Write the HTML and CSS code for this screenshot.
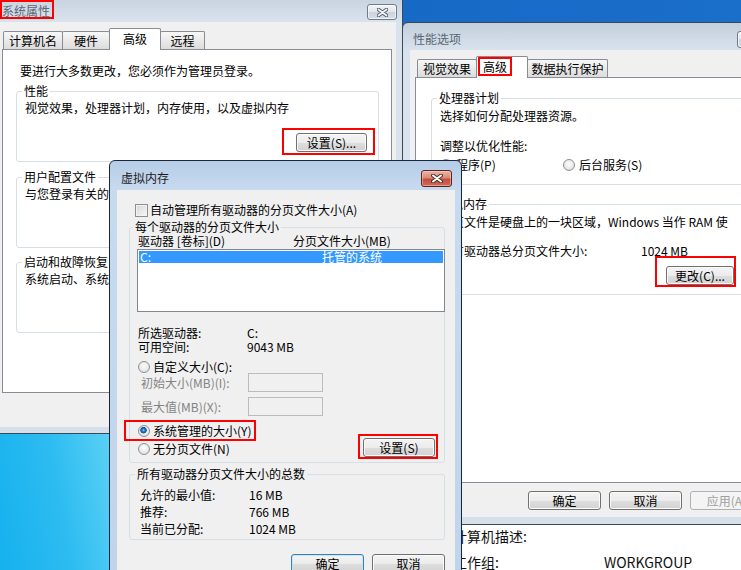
FILE: index.html
```html
<!DOCTYPE html>
<html lang="zh-CN">
<head>
    <meta charset="UTF-8">
    <meta name="viewport" content="width=device-width, initial-scale=1.0">
    <title>虚拟内存</title>
    <link rel="stylesheet" href="styles.css">
</head>
<body>
    <div class="wallpaper"></div>

    <!-- 系统属性 -->
    <div class="window inactive win-sys">
        <div class="titlebar">
            <span class="title hl hl-title">系统属性</span>
            <span class="close">
                <svg width="11" height="9" viewBox="0 0 11 9"><path d="M1.5 1.5L9.5 7.5M9.5 1.5L1.5 7.5" stroke="#4e5b69" stroke-width="3.6" stroke-linecap="round"/><path d="M1.5 1.5L9.5 7.5M9.5 1.5L1.5 7.5" stroke="#f2f4f7" stroke-width="1.8" stroke-linecap="round"/></svg>
            </span>
        </div>
        <div class="win-body">
            <div class="tabs">
                <span class="tab t-name">计算机名</span>
                <span class="tab t-hw">硬件</span>
                <span class="tab sel t-adv">高级</span>
                <span class="tab t-remote">远程</span>
            </div>
            <div class="panel">
                <p class="intro">要进行大多数更改，您必须作为管理员登录。</p>
                <fieldset class="grp g-perf">
                    <legend>性能</legend>
                    <p>视觉效果，处理器计划，内存使用，以及虚拟内存</p>
                    <div class="btn-row">
                        <span class="hl hl-perf"><button class="btn btn-perf">设置(S)...</button></span>
                    </div>
                </fieldset>
                <fieldset class="grp g-prof">
                    <legend>用户配置文件</legend>
                    <p>与您登录有关的桌面设置</p>
                </fieldset>
                <fieldset class="grp g-boot">
                    <legend>启动和故障恢复</legend>
                    <p>系统启动、系统失败和调试信息</p>
                </fieldset>
            </div>
        </div>
    </div>

    <!-- 计算机名 (behind) -->
    <div class="win-lower">
        <div class="row"><span>计算机描述:</span><span></span></div>
        <div class="row"><span>工作组:</span><span>WORKGROUP</span></div>
    </div>

    <!-- 性能选项 -->
    <div class="window inactive win-perf">
        <div class="titlebar">
            <span class="title">性能选项</span>
            <span class="close">
                <svg width="11" height="9" viewBox="0 0 11 9"><path d="M1.5 1.5L9.5 7.5M9.5 1.5L1.5 7.5" stroke="#4e5b69" stroke-width="3.6" stroke-linecap="round"/><path d="M1.5 1.5L9.5 7.5M9.5 1.5L1.5 7.5" stroke="#f2f4f7" stroke-width="1.8" stroke-linecap="round"/></svg>
            </span>
        </div>
        <div class="win-body">
            <div class="tabs">
                <span class="tab t-visual">视觉效果</span>
                <span class="tab sel t-adv2"><span class="hl hl-tab">高级</span></span>
                <span class="tab t-dep">数据执行保护</span>
            </div>
            <div class="panel">
                <fieldset class="grp g-cpu">
                    <legend>处理器计划</legend>
                    <p>选择如何分配处理器资源。</p>
                    <p class="opt-label">调整以优化性能:</p>
                    <div class="radios">
                        <span class="ropt"><span class="radio on"></span>程序(P)</span>
                        <span class="ropt"><span class="radio"></span>后台服务(S)</span>
                    </div>
                </fieldset>
                <fieldset class="grp g-vm">
                    <legend>虚拟内存</legend>
                    <p>分页文件是硬盘上的一块区域，Windows 当作 RAM 使<br>用。</p>
                    <div class="total"><span>所有驱动器总分页文件大小:</span><span>1024 MB</span></div>
                    <div class="btn-line">
                        <span class="hl hl-change"><button class="btn btn-change">更改(C)...</button></span>
                    </div>
                </fieldset>
            </div>
            <div class="perf-btns">
                <button class="btn btn-dlg">确定</button>
                <button class="btn btn-dlg">取消</button>
                <button class="btn btn-dlg off">应用(A)</button>
            </div>
        </div>
    </div>

    <!-- 虚拟内存 -->
    <div class="window active win-vm">
        <div class="titlebar">
            <span class="title">虚拟内存</span>
            <span class="close red">
                <svg width="12" height="9" viewBox="0 0 12 9"><path d="M2 1.5L10 7.5M10 1.5L2 7.5" stroke="#4a2a25" stroke-width="3.8" stroke-linecap="round"/><path d="M2 1.5L10 7.5M10 1.5L2 7.5" stroke="#ffffff" stroke-width="2" stroke-linecap="round"/></svg>
            </span>
        </div>
        <div class="win-body">
            <div class="chk-row"><span class="chk"></span>自动管理所有驱动器的分页文件大小(A)</div>

            <fieldset class="grp g-page">
                <legend>每个驱动器的分页文件大小</legend>
                <div class="cols"><span>驱动器 [卷标](D)</span><span>分页文件大小(MB)</span></div>
                <div class="listbox">
                    <div class="lrow"><span>C:</span><span>托管的系统</span></div>
                </div>
                <div class="info">
                    <div class="kv"><span>所选驱动器:</span><span>C:</span></div>
                    <div class="kv"><span>可用空间:</span><span>9043 MB</span></div>
                </div>
                <div class="ropt custom"><span class="radio"></span>自定义大小(C):</div>
                <div class="size-row"><span>初始大小(MB)(I):</span><input class="field" type="text" disabled></div>
                <div class="size-row"><span>最大值(MB)(X):</span><input class="field" type="text" disabled></div>
                <div class="vm-bottom">
                    <div class="vm-radios">
                        <span class="hl hl-sys"><span class="ropt"><span class="radio on"></span>系统管理的大小(Y)</span></span>
                        <div class="ropt none"><span class="radio"></span>无分页文件(N)</div>
                    </div>
                    <span class="hl hl-set"><button class="btn btn-set">设置(S)</button></span>
                </div>
            </fieldset>

            <fieldset class="grp g-total">
                <legend>所有驱动器分页文件大小的总数</legend>
                <div class="kv"><span>允许的最小值:</span><span>16 MB</span></div>
                <div class="kv"><span>推荐:</span><span>766 MB</span></div>
                <div class="kv"><span>当前已分配:</span><span>1024 MB</span></div>
            </fieldset>

            <div class="vm-btns">
                <button class="btn btn-dlg def">确定</button>
                <button class="btn btn-dlg">取消</button>
            </div>
        </div>
    </div>
</body>
</html>
```

FILE: styles.css
```css
* {
    box-sizing: border-box;
}

html, body {
    margin: 0;
    height: 100%;
    overflow: hidden;
}

body {
    position: relative;
    background: linear-gradient(90deg, #1462c0, #1a6fcb);
    font-family: "Noto Sans CJK SC", "Noto Sans", sans-serif;
    font-size: 12px;
    line-height: 14px;
    color: #000;
}

p {
    margin: 0;
}

.wallpaper {
    position: absolute;
    left: 0;
    top: 400px;
    width: 130px;
    height: 170px;
    background: linear-gradient(80deg, #16b1ee 0%, #2dbcf1 45%, #6ed9f6 100%);
}

/* Window chrome */
.window {
    position: absolute;
    display: flex;
    flex-direction: column;
    border: 1px solid #3d4857;
    border-radius: 6px 6px 0 0;
}

.window.inactive {
    background: linear-gradient(#c3cfdc, #d9e3ee 28px, #d6e0eb);
}

.window.active {
    background: linear-gradient(#b6cde8, #c8daee 29px, #bfd3ea);
    border-color: #17283c;
}

.titlebar {
    flex: none;
    display: flex;
    justify-content: space-between;
    align-items: flex-start;
}

.title {
    color: #5c6672;
}

.active .title {
    color: #1b1b1b;
}

.close {
    width: 31px;
    height: 17px;
    display: flex;
    align-items: center;
    justify-content: center;
    border: 1px solid #6f7b89;
    border-radius: 3px;
    background: linear-gradient(#f3f5f8, #e1e6ec 48%, #ccd3db 52%, #d9dfe6);
    box-shadow: inset 0 0 0 1px rgba(255, 255, 255, 0.6);
}

.close.red {
    border-color: #5e2419;
    background: linear-gradient(#ebb4a7, #d98b79 45%, #c24e3d 55%, #d06b59);
    box-shadow: inset 0 0 0 1px rgba(255, 220, 210, 0.45);
}

.win-body {
    flex: 1;
    min-height: 0;
    background: #f0f0f0;
}

/* Red highlight boxes */
.hl {
    display: inline-flex;
    border: 2px solid #f00;
}

/* Tabs */
.tabs {
    display: flex;
    align-items: flex-end;
    height: 21px;
}

.tab {
    height: 18px;
    display: flex;
    align-items: center;
    justify-content: center;
    border: 1px solid #898c95;
    border-bottom: none;
    border-radius: 2px 2px 0 0;
    background: linear-gradient(#f7f7f7, #eaeaea 50%, #dcdcdc);
}

.tab + .tab {
    margin-left: -1px;
}

.tab.sel {
    height: 22px;
    margin-bottom: -1px;
    padding-bottom: 2px;
    background: #fff;
    position: relative;
    z-index: 1;
}

.panel {
    background: #fff;
    border: 1px solid #898c95;
}

/* Group boxes */
.grp {
    margin: 0;
    min-width: 0;
    padding: 3px 8px 0;
    border: 1px solid #d5dfe5;
    border-radius: 3px;
}

.grp legend {
    padding: 0 2px;
    margin-left: -3px;
    line-height: 14px;
}

/* Buttons */
.btn {
    height: 19px;
    padding: 0;
    border: 1px solid #707070;
    border-radius: 3px;
    background: linear-gradient(#f4f4f4, #ececec 50%, #dedede 51%, #d2d2d2);
    box-shadow: inset 0 0 0 1px #fbfbfb;
    font: inherit;
    line-height: 17px;
    color: #000;
    text-align: center;
}

.btn.def {
    border-color: #3c7fb1;
    box-shadow: inset 0 0 0 1px #c6e6f8;
}

.btn.off {
    border-color: #adb2b5;
    background: #f4f4f4;
    box-shadow: none;
    color: #a0a0a0;
}

.btn-dlg {
    width: 73px;
}

/* Radios and checkbox */
.ropt {
    display: flex;
    align-items: center;
    gap: 3px;
}

.radio {
    flex: none;
    width: 12px;
    height: 12px;
    border-radius: 50%;
    border: 1px solid #8f8f8f;
    background: radial-gradient(circle at 50% 40%, #ffffff, #e3e3e3 70%, #d0d0d0);
}

.radio.on {
    background:
        radial-gradient(circle 3.6px at 45% 42%, #9dd5f7 0, #2a86d0 35%, #0f4f93 80%, rgba(15, 79, 147, 0) 100%),
        radial-gradient(circle at 50% 40%, #ffffff, #dcdcdc);
}

.chk {
    flex: none;
    width: 13px;
    height: 13px;
    border: 1px solid #8f8f8f;
    background: linear-gradient(135deg, #d6d6d6, #f7f7f7);
    box-shadow: inset 0 0 0 1px #f2f2f2;
}

.kv {
    display: flex;
}

/* 系统属性 */
.win-sys {
    left: -8px;
    top: -8px;
    width: 411px;
    height: 442px;
    padding: 0 6px 6px 7px;
    z-index: 1;
}

.win-sys .titlebar {
    height: 29px;
    padding-top: 7px;
}

.hl-title {
    height: 19px;
    padding: 2px 2px 0 0;
    line-height: 13px;
}

.win-sys .close {
    width: 30px;
    height: 16px;
    margin: 4px -1px 0 0;
}

.win-sys .tabs {
    margin: 6px 0 0 3px;
}

.t-name { width: 60px; }
.t-hw { width: 48px; }
.t-adv { width: 52px; }
.t-remote { width: 45px; }

.win-sys .panel {
    margin-left: 2px;
    width: 390px;
    height: 344px;
    padding: 14px 0 0 13px;
}

.intro {
    margin: 0 0 6px 4px;
}

.win-sys .grp {
    width: 363px;
}

.g-perf {
    padding-bottom: 6px;
}

.btn-row {
    display: flex;
    justify-content: flex-end;
    margin-top: 13px;
}

.hl-perf {
    margin-right: -5px;
    padding: 3px 6px 1px 12px;
}

.btn-perf {
    width: 71px;
}

.g-prof {
    margin-top: 8px;
    padding-bottom: 46px;
}

.g-boot {
    margin-top: 7px;
    padding-bottom: 46px;
}

/* 计算机名 window behind */
.win-lower {
    position: absolute;
    left: 430px;
    top: 480px;
    width: 340px;
    height: 120px;
    padding: 43px 0 0 23px;
    background: #fff;
    font-size: 14px;
    line-height: 26px;
    color: #111;
    z-index: 2;
}

.win-lower .row {
    display: flex;
}

.win-lower .row span:first-child {
    width: 151px;
}

/* 性能选项 */
.win-perf {
    left: 402px;
    top: 22px;
    width: 374px;
    height: 503px;
    padding: 0 7px 7px;
    z-index: 3;
}

.win-perf .titlebar {
    height: 27px;
}

.win-perf .title {
    margin: 9px 0 0 3px;
}

.win-perf .close {
    margin-top: 8px;
}

.win-perf .tabs {
    margin: 6px 0 0 7px;
}

.t-visual { width: 60px; }
.t-dep { width: 81px; }

.tab.t-adv2 {
    width: 52px;
    align-items: flex-start;
    justify-content: flex-start;
    padding: 0 0 0 1px;
}

.hl-tab {
    padding: 0 3px;
    line-height: 15px;
}

.win-perf .panel {
    margin-left: 5px;
    height: 406px;
    padding: 13px 15px 0;
}

.g-cpu {
    padding: 4px 8px 12px;
}

.opt-label {
    margin-top: 16px;
}

.radios {
    display: flex;
    margin-top: 5px;
}

.radios .ropt {
    gap: 4px;
}

.radios .ropt:first-child {
    width: 123px;
}

.g-vm {
    margin-top: 12px;
    padding: 4px 8px 7px;
}

.total {
    display: flex;
    margin-top: 1px;
}

.total span:first-child {
    width: 201px;
}

.btn-line {
    margin-top: -2px;
    padding-left: 215px;
}

.hl-change {
    padding: 8px 0 0 9px;
}

.btn-change {
    width: 68px;
}

.perf-btns {
    display: flex;
    gap: 8px;
    margin-top: 8px;
    padding-left: 118px;
}

/* 虚拟内存 */
.win-vm {
    left: 109px;
    top: 160px;
    width: 353px;
    height: 440px;
    padding: 0 6px 7px 7px;
    z-index: 4;
}

.win-vm .titlebar {
    height: 29px;
}

.win-vm .title {
    margin: 10px 0 0 4px;
}

.win-vm .close {
    margin: 9px 3px 0 0;
}

.win-vm .win-body {
    padding: 13px 10px 0 12px;
}

.chk-row {
    display: flex;
    align-items: center;
    gap: 2px;
    margin-left: 6px;
}

.g-page {
    margin-top: 3px;
    padding: 0 8px 3px;
}

.g-page legend,
.g-total legend {
    margin-left: -5px;
}

.cols {
    display: flex;
}

.cols span:first-child {
    width: 155px;
}

.listbox {
    width: 308px;
    height: 63px;
    margin: 1px 0 0 -1px;
    padding: 1px;
    border: 1px solid #828790;
    background: #fff;
}

.lrow {
    display: flex;
    height: 12px;
    line-height: 12px;
    background: #3399ff;
    color: #fff;
}

.lrow span:first-child {
    width: 183px;
    padding-left: 1px;
}

.info {
    margin-top: 14px;
}

.info .kv span:first-child {
    width: 109px;
}

.ropt.custom {
    margin-top: 7px;
    line-height: 12px;
}

.size-row {
    display: flex;
    align-items: center;
    height: 19px;
    padding-left: 3px;
    color: #838383;
}

.size-row + .size-row {
    margin-top: 5px;
}

.size-row span {
    width: 107px;
}

.field {
    width: 75px;
    height: 19px;
    margin: 0;
    border: 1px solid #bcbcbc;
    background: #f0f0f0;
}

.vm-bottom {
    display: flex;
    align-items: flex-start;
    margin-top: 4px;
}

.vm-radios {
    margin-left: -14px;
}

.hl-sys {
    padding: 2px 2px 1px 12px;
}

.ropt.none {
    margin: 1px 0 0 14px;
}

.hl-set {
    margin: 14px -2px 0 auto;
    padding: 2px 1px 0 3px;
}

.btn-set {
    width: 72px;
}

.g-total {
    margin-top: 4px;
    padding: 5px 8px 2px 10px;
    line-height: 17px;
}

.g-total .kv span:first-child {
    width: 109px;
}

.vm-btns {
    display: flex;
    justify-content: flex-end;
    gap: 8px;
    margin-top: 14px;
}
```
